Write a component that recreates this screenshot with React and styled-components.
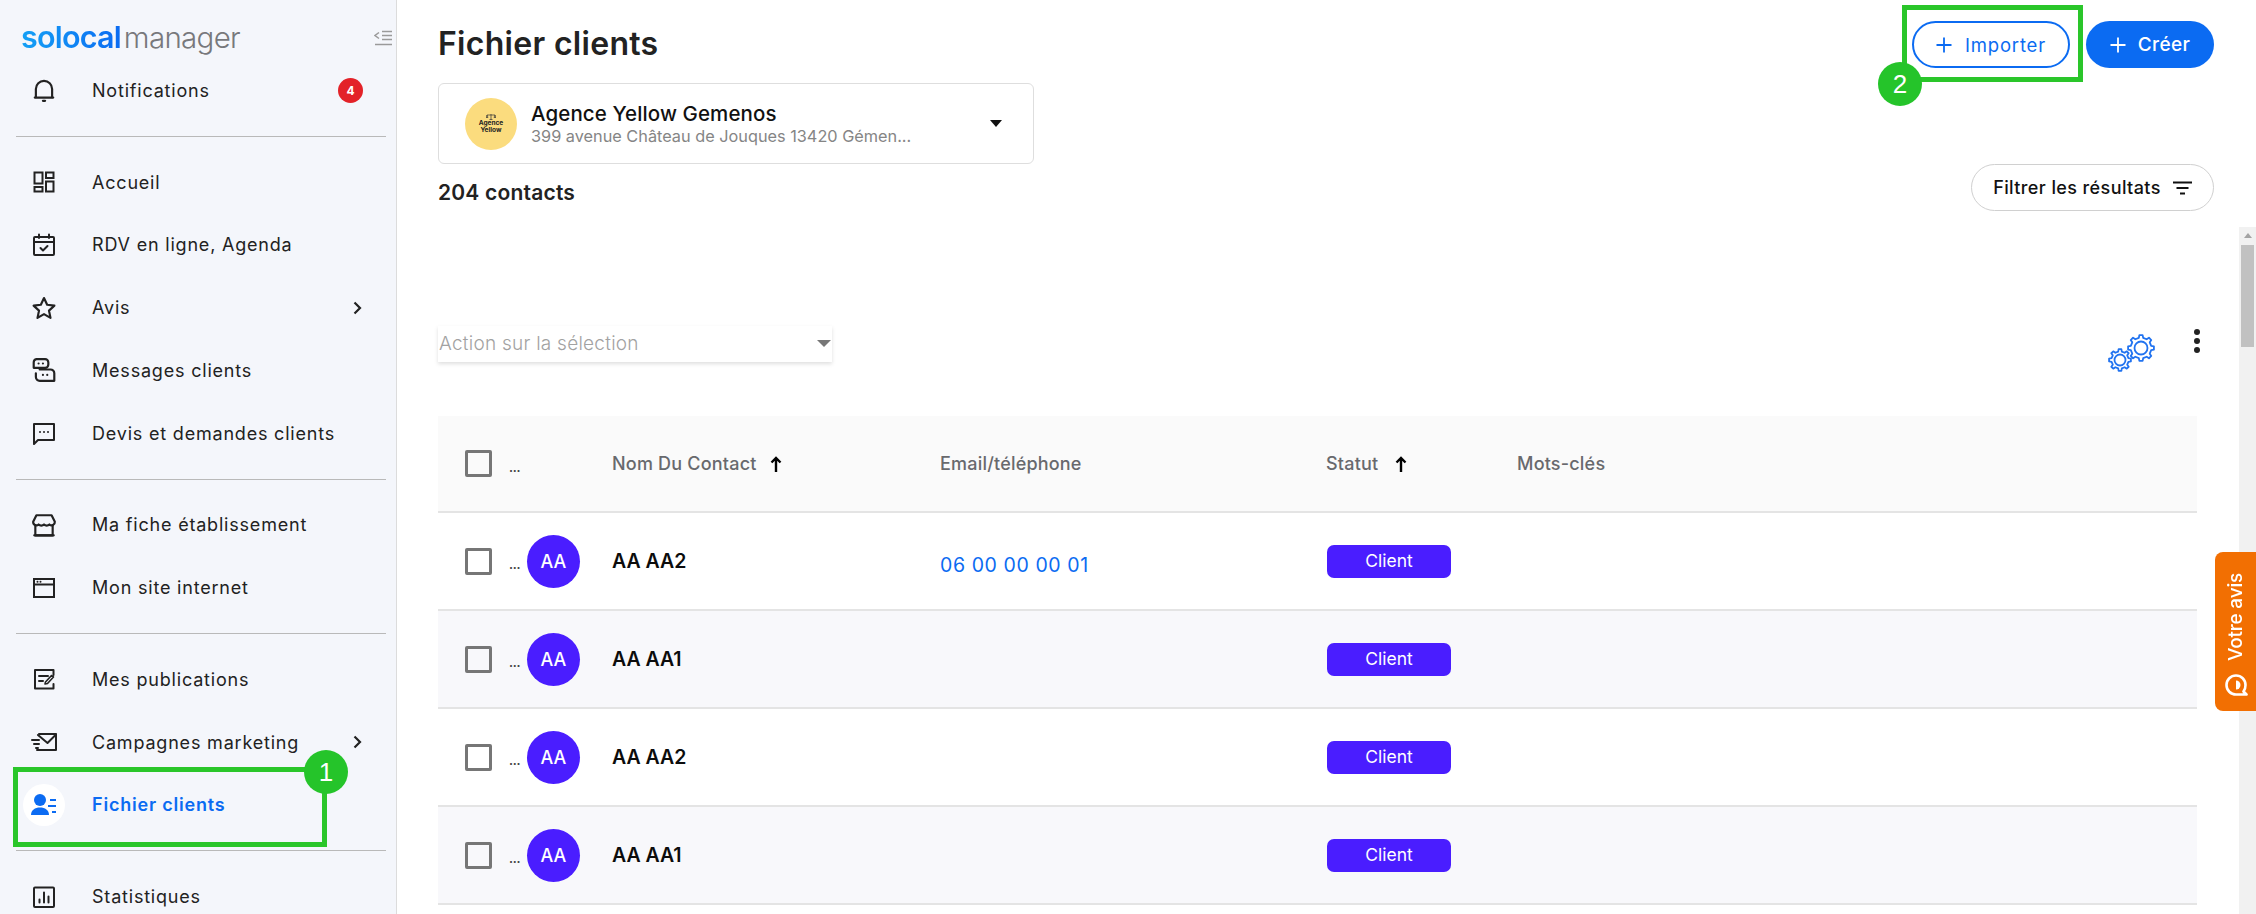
import React from "react";
import styled, { createGlobalStyle } from "styled-components";

const Global = createGlobalStyle`
  html, body { margin: 0; padding: 0; background: #fff; }
  * { box-sizing: border-box; }
  body { font-family: Inter, "Liberation Sans", sans-serif; color: #222; }
`;

const Page = styled.div`
  position: relative;
  display: flex;
  width: 2256px;
  height: 914px;
  overflow: hidden;
  background: #fff;
`;

const Sidebar = styled.aside`
  flex: 0 0 397px;
  height: 914px;
  background: #f4f6fb;
  border-right: 1px solid #dcdcdc;
  overflow: hidden;
`;

const LogoBar = styled.div`
  display: flex;
  align-items: center;
  height: 59px;
  padding: 0 4px 0 21px;
`;

const Logo = styled.div`
  display: flex;
  align-items: baseline;
  font-family: Inter, sans-serif;
  line-height: 44px;
  margin-top: 14px;
`;

const LogoBlue = styled.span`
  font-size: 30.5px;
  letter-spacing: -0.8px;
  font-weight: 600;
  background: linear-gradient(90deg, #14a0f5, #0b6bf2);
  -webkit-background-clip: text;
  background-clip: text;
  color: transparent;
`;

const LogoGrey = styled.span`
  font-size: 29.5px;
  letter-spacing: -0.7px;
  font-weight: 300;
  color: #77787c;
  margin-left: 3px;
`;

const Collapse = styled.div`
  margin-left: auto;
  margin-top: 16px;
  display: flex;
`;

const Divider = styled.hr`
  margin: 14px 10px 14px 16px;
  border: 0;
  height: 1px;
  background: #b9b9b9;
`;

const NavItem = styled.div`
  display: flex;
  align-items: center;
  height: 62.75px;
  padding: 0 33px 0 23px;
  font-size: 18px;
  letter-spacing: 0.8px;
  font-weight: ${(p) => (p.$active ? 600 : 400)};
  color: ${(p) => (p.$active ? "#0b6bf2" : "#222")};
`;

const NavIcon = styled.span`
  flex: 0 0 42px;
  width: 42px;
  height: 42px;
  margin-right: 27px;
  display: flex;
  align-items: center;
  justify-content: center;
  border-radius: 50%;
  background: ${(p) => (p.$active ? "#fff" : "transparent")};
`;

const Badge = styled.span`
  margin-left: auto;
  width: 25px;
  height: 25px;
  border-radius: 50%;
  background: #e32228;
  color: #fff;
  font-size: 12px;
  font-weight: 700;
  letter-spacing: 0;
  display: flex;
  align-items: center;
  justify-content: center;
`;

const Chevron = styled.svg`
  margin-left: auto;
  margin-right: 1px;
`;

const Main = styled.main`
  flex: 1;
  min-width: 0;
  display: flex;
  flex-direction: column;
  height: 914px;
`;

const Header = styled.header`
  flex: 0 0 227px;
  display: flex;
  justify-content: space-between;
  padding: 0 42px 0 41px;
`;

const HeaderLeft = styled.div`
  display: flex;
  flex-direction: column;
`;

const Title = styled.h1`
  margin: 25px 0 0;
  font-size: 32px;
  line-height: 38px;
  font-weight: 600;
  color: #222;
  letter-spacing: 0.3px;
`;

const PlaceCard = styled.div`
  margin-top: 20px;
  width: 596px;
  height: 81px;
  border: 1.5px solid #dedede;
  border-radius: 6px;
  display: flex;
  align-items: center;
  padding: 0 31px 0 26px;
`;

const PlaceAvatar = styled.div`
  flex: 0 0 52px;
  height: 52px;
  border-radius: 50%;
  background: #fbdc7e;
  display: flex;
  flex-direction: column;
  align-items: center;
  justify-content: center;
  font-size: 6.5px;
  line-height: 7px;
  font-weight: 700;
  color: #222;
  text-align: center;
`;

const PlaceText = styled.div`
  margin: -2px 0 0 14px;
`;

const PlaceName = styled.div`
  font-size: 20.5px;
  line-height: 26px;
  font-weight: 500;
  color: #111;
  letter-spacing: 0.1px;
`;

const PlaceAddress = styled.div`
  font-size: 16.3px;
  line-height: 18px;
  font-weight: 400;
  color: #858585;
`;

const Caret = styled.span`
  margin-left: auto;
  width: 0;
  height: 0;
  border-left: ${(p) => p.$half || 6}px solid transparent;
  border-right: ${(p) => p.$half || 6}px solid transparent;
  border-top: 7px solid ${(p) => p.$color || "#111"};
`;

const Contacts = styled.div`
  margin-top: 16px;
  font-size: 21px;
  line-height: 26px;
  font-weight: 600;
  letter-spacing: 0.2px;
  color: #222;
`;

const HeaderRight = styled.div`
  display: flex;
  flex-direction: column;
  align-items: flex-end;
  padding-top: 21px;
`;

const ButtonRow = styled.div`
  display: flex;
  gap: 16px;
`;

const Pill = styled.button`
  height: 47px;
  border-radius: 24px;
  font-family: inherit;
  font-size: 18px;
  font-weight: 500;
  letter-spacing: 0.4px;
  display: flex;
  align-items: center;
  justify-content: center;
  padding: 0;
`;

const ImportButton = styled(Pill)`
  width: 158px;
  gap: 13px;
  background: #fff;
  color: #0b6bf2;
  font-size: 18.5px;
  letter-spacing: 0.8px;
  font-weight: 400;
  border: 2px solid #0b6bf2;
`;

const CreateButton = styled(Pill)`
  width: 128px;
  gap: 12px;
  background: #0b6bf2;
  color: #fff;
  font-size: 19px;
  border: 0;
`;

const FilterButton = styled(Pill)`
  margin-top: 96px;
  width: 243px;
  gap: 12px;
  background: #fff;
  color: #111;
  border: 1.5px solid #d0d0d0;
`;

const Body = styled.div`
  flex: 1;
  min-height: 0;
  display: flex;
`;

const Content = styled.div`
  flex: 1;
  min-width: 0;
  padding: 0 39px 0 41px;
  overflow: hidden;
`;

const Toolbar = styled.div`
  height: 189px;
  display: flex;
  justify-content: space-between;
`;

const ActionSelect = styled.div`
  margin-top: 99px;
  width: 394px;
  height: 36px;
  background: #fff;
  box-shadow: 0 2px 4px rgba(0, 0, 0, 0.13);
  display: flex;
  align-items: center;
  justify-content: space-between;
  padding: 0 1px 2px;
  font-size: 19px;
  letter-spacing: 0.25px;
  font-weight: 300;
  color: #a2a2a2;
`;

const ToolIcons = styled.div`
  display: flex;
  align-items: flex-start;
  padding-top: 106px;
`;

const Kebab = styled.div`
  margin-left: 38px;
  margin-top: -4px;
  display: flex;
  flex-direction: column;
  gap: 3px;
`;

const Dot = styled.span`
  width: 6px;
  height: 6px;
  border-radius: 50%;
  background: #222;
`;

const Table = styled.div`
  margin-right: 3px;
`;

const Grid = styled.div`
  display: grid;
  grid-template-columns: 174px 328px 386px 191px 1fr;
  align-items: center;
  border-bottom: 2px solid #e4e4e4;
`;

const HeadRow = styled(Grid)`
  height: 97px;
  background: #fafafa;
  font-size: 18px;
  letter-spacing: 0.2px;
  font-weight: 500;
  color: #68696d;
`;

const Row = styled(Grid)`
  height: 98px;
  background: ${(p) => (p.$alt ? "#f8f8fb" : "#fff")};
`;

const SelectCell = styled.div`
  display: flex;
  align-items: center;
  padding-left: 27px;
`;

const Check = styled.span`
  flex: 0 0 27px;
  height: 27px;
  border: 3px solid #767676;
  border-radius: 2px;
`;

const Ellipsis = styled.span`
  margin-left: 17px;
  margin-top: 8px;
  width: 11px;
  font-size: 12px;
  line-height: 12px;
  font-weight: 700;
  letter-spacing: -0.3px;
  color: #444;
`;

const Avatar = styled.span`
  margin-left: 7px;
  flex: 0 0 53px;
  height: 53px;
  border-radius: 50%;
  background: #4a1dff;
  color: #fff;
  font-size: 18px;
  font-weight: 500;
  display: flex;
  align-items: center;
  justify-content: center;
`;

const SortCell = styled.div`
  display: flex;
  align-items: center;
  gap: ${(p) => p.$gap}px;
`;

const Name = styled.div`
  font-size: 19.5px;
  font-weight: 600;
  color: #0c0c0c;
  margin-top: -1px;
`;

const Phone = styled.div`
  font-size: 19.5px;
  color: #0b6bf2;
  letter-spacing: 0.6px;
  margin-top: 7px;
`;

const Chip = styled.div`
  margin-left: 1px;
  width: 124px;
  height: 33px;
  border-radius: 7px;
  background: #4a1dff;
  color: #fff;
  font-size: 17.5px;
  display: flex;
  align-items: center;
  justify-content: center;
  padding-bottom: 2px;
`;

const ScrollTrack = styled.div`
  flex: 0 0 17px;
  background: #f1f1f1;
  display: flex;
  flex-direction: column;
  align-items: center;
`;

const ScrollUp = styled.span`
  margin-top: 6px;
  width: 0;
  height: 0;
  border-left: 4.5px solid transparent;
  border-right: 4.5px solid transparent;
  border-bottom: 5px solid #a3a3a3;
`;

const ScrollThumb = styled.span`
  margin-top: 7px;
  width: 13px;
  height: 102px;
  background: #c1c1c1;
`;

const FeedbackTab = styled.div`
  position: absolute;
  right: 0;
  top: 552px;
  width: 41px;
  height: 159px;
  background: #f26f02;
  border-radius: 8px 0 0 8px;
  display: flex;
  flex-direction: column;
  align-items: center;
  padding-top: 21px;
  color: #fff;
`;

const FeedbackText = styled.span`
  writing-mode: vertical-rl;
  transform: rotate(180deg);
  font-size: 19px;
  line-height: 20px;
  font-weight: 500;
  letter-spacing: -0.2px;
`;

const FeedbackIcon = styled.svg`
  margin-top: 12px;
`;

const HighlightBox = styled.div`
  position: absolute;
  border: 5px solid #2ac62a;
  pointer-events: none;
`;

const SidebarHighlight = styled(HighlightBox)`
  left: 13px;
  top: 767px;
  width: 314px;
  height: 80px;
`;

const ImportHighlight = styled(HighlightBox)`
  left: 1902px;
  top: 5px;
  width: 181px;
  height: 77px;
`;

const StepBadge = styled.div`
  position: absolute;
  width: 44px;
  height: 44px;
  border-radius: 50%;
  background: #25c42a;
  color: #fff;
  font-family: "Liberation Sans", Arial, sans-serif;
  font-size: 26px;
  display: flex;
  align-items: center;
  justify-content: center;
`;

const StepOne = styled(StepBadge)`
  left: 304px;
  top: 750px;
`;

const StepTwo = styled(StepBadge)`
  left: 1878px;
  top: 62px;
`;

const S = ({ children, w = 24, h = 24, vb = "0 0 24 24" }) => (
  <svg width={w} height={h} viewBox={vb} fill="none" stroke="#222" strokeWidth="2" strokeLinejoin="round" strokeLinecap="round">
    {children}
  </svg>
);

const Bell = () => (
  <S w={26} h={26}>
    <path d="M4.5 18.5V11a7.5 7.5 0 0 1 15 0v7.5" />
    <path d="M3.5 19h17" />
    <path d="M11 22h2" />
  </S>
);
const Dash = () => (
  <S>
    <rect x="2.5" y="2.5" width="8" height="11" strokeLinejoin="miter" />
    <rect x="14" y="2.5" width="7.5" height="5.5" strokeLinejoin="miter" />
    <rect x="2.5" y="17" width="8" height="4.5" strokeLinejoin="miter" />
    <rect x="14" y="11.5" width="7.5" height="10" strokeLinejoin="miter" />
  </S>
);
const Calendar = () => (
  <S>
    <rect x="2" y="4" width="20" height="18" rx="1" />
    <path d="M2 9h20M7 1.5V5M17 1.5V5" />
    <path d="M8.5 15l2.5 2.5 4.500-4.500" />
  </S>
);
const Star = () => (
  <S w={26} h={26}>
    <path d="M12 2.8l2.9 6.2 6.7.8-5 4.6 1.4 6.700-6-3.400-6 3.400 1.400-6.700-5-4.600 6.700-.8z" />
  </S>
);
const Messages = () => (
  <S w={26} h={26}>
    <path d="M5 2h8a3 3 0 0 1 3 3v2a3 3 0 0 1-3 3H2.500V5a3 3 0 0 1 2.500-3z" />
    <path d="M8 11.500h10a3.500 3.500 0 0 1 3.500 3.500v7H8a3.500 3.500 0 0 1-3.500-3.500V15" />
    <path d="M7 6h.01M11 6h.01M11 16.500h.01M15 16.500h.01" />
  </S>
);
const Quote = () => (
  <S>
    <path d="M2 3h20v16H6l-4 4z" />
    <path d="M8 11h.01M12 11h.01M16 11h.01" />
  </S>
);
const Store = () => (
  <S w={26} h={26}>
    <path d="M5 3h14l3 6a3 3 0 0 1-5 2.500 3.500 3.500 0 0 1-5 0 3.500 3.500 0 0 1-5 0A3 3 0 0 1 2 9z" />
    <path d="M4 12v9.500h16V12" />
    <path d="M3 21.500h18" />
  </S>
);
const Browser = () => (
  <S>
    <rect x="2" y="3" width="20" height="18" strokeLinejoin="miter" />
    <path d="M2 8.500h20M5.500 5.800h.01M8.500 5.800h.01" />
  </S>
);
const Publish = () => (
  <S>
    <path d="M21.500 8V3H3v18.500h18.500V17" />
    <path d="M7 9h9M7 14h4" />
    <path d="M13 17l2.500-.5 6-6.500-2-1.500-6 6.500z" strokeWidth="1.600" />
  </S>
);
const Mail = () => (
  <S w={26} h={24} vb="0 0 26 24">
    <path d="M8 4h17v16H6" />
    <path d="M7 5l9.500 8L25 4.500" />
    <path d="M1 10h7M3 14h5M5 18h2" />
  </S>
);
const ClientsIcon = () => (
  <svg width="26" height="24" viewBox="0 0 26 24" fill="#0b6bf2">
    <circle cx="9" cy="7" r="6" />
    <path d="M0 22c0-5 4-7.500 9-7.500s9 2.500 9 7.500z" />
    <path d="M19 6h6v2h-6zM17 12h8v2h-8zM21 18h4v2h-4z" />
  </svg>
);
const Stats = () => (
  <S>
    <rect x="2" y="2.500" width="20" height="19.500" rx="1" />
    <path d="M7.500 17.500v-3M12 17.500V7.500M16.500 17.500v-6" />
  </S>
);

const Arrow = () => (
  <svg width="12" height="16" viewBox="0 0 12 16" fill="none" stroke="#000" strokeWidth="2.400">
    <path d="M6 16V2M1.500 6.500L6 2l4.500 4.500" />
  </svg>
);

const Plus = ({ color }) => (
  <svg width="16" height="16" viewBox="0 0 16 16" stroke={color} strokeWidth="1.800">
    <path d="M8 0.500v15M0.500 8h15" />
  </svg>
);

const gearPath = (cx, cy, rOuter, rInner, teeth) => {
  const step = (Math.PI * 2) / teeth;
  const pts = [];
  for (let i = 0; i < teeth; i++) {
    const a = i * step - Math.PI / 2;
    const d = step * 0.2;
    const pt = (r, t) => `${(cx + r * Math.cos(t)).toFixed(2)} ${(cy + r * Math.sin(t)).toFixed(2)}`;
    pts.push(pt(rInner, a - d * 1.35), pt(rOuter, a - d * 0.8), pt(rOuter, a + d * 0.8), pt(rInner, a + d * 1.35));
  }
  return `M${pts.join("L")}Z`;
};

const Gears = () => (
  <svg width="48" height="40" viewBox="0 0 48 40" fill="none" stroke="#2173f0" strokeWidth="1.800" strokeLinejoin="round">
    <path d={gearPath(12, 27, 11, 8.600, 8)} />
    <circle cx="12" cy="27" r="5.500" />
    <path d={gearPath(33, 15, 13, 10.400, 8)} />
    <circle cx="33" cy="15" r="6.500" />
  </svg>
);

const FilterIcon = () => (
  <svg width="19" height="14" viewBox="0 0 19 14" stroke="#111" strokeWidth="2">
    <path d="M0 1.500h19M3.500 7h12M7 12.500h5" />
  </svg>
);

const navGroups = [
  [{ label: "Notifications", Icon: Bell, badge: "4" }],
  [
    { label: "Accueil", Icon: Dash },
    { label: "RDV en ligne, Agenda", Icon: Calendar },
    { label: "Avis", Icon: Star, more: true },
    { label: "Messages clients", Icon: Messages },
    { label: "Devis et demandes clients", Icon: Quote },
  ],
  [
    { label: "Ma fiche établissement", Icon: Store },
    { label: "Mon site internet", Icon: Browser },
  ],
  [
    { label: "Mes publications", Icon: Publish },
    { label: "Campagnes marketing", Icon: Mail, more: true },
    { label: "Fichier clients", Icon: ClientsIcon, active: true },
  ],
  [{ label: "Statistiques", Icon: Stats }],
];

const rows = [
  { name: "AA AA2", phone: "06 00 00 00 01" },
  { name: "AA AA1" },
  { name: "AA AA2" },
  { name: "AA AA1" },
];

export default function App() {
  return (
    <Page>
      <Global />
      <Sidebar>
        <LogoBar>
          <Logo>
            <LogoBlue>solocal</LogoBlue>
            <LogoGrey>manager</LogoGrey>
          </Logo>
          <Collapse>
            <svg width="18" height="16" viewBox="0 0 18 16" fill="none" stroke="#9a9a9a" strokeWidth="1.500">
              <path d="M5 2.500L1 5.500l4 3M8 1.500h10M8 5.500h10M8 9.500h10M1 14.500h17" />
            </svg>
          </Collapse>
        </LogoBar>
        {navGroups.map((group, gi) => (
          <React.Fragment key={gi}>
            {gi > 0 && <Divider />}
            {group.map(({ label, Icon, badge, more, active }) => (
              <NavItem key={label} $active={active}>
                <NavIcon $active={active}>
                  <Icon />
                </NavIcon>
                {label}
                {badge && <Badge>{badge}</Badge>}
                {more && (
                  <Chevron width="9" height="14" viewBox="0 0 9 14" fill="none" stroke="#222" strokeWidth="2.200">
                    <path d="M1.500 1.500L7 7l-5.500 5.500" />
                  </Chevron>
                )}
              </NavItem>
            ))}
          </React.Fragment>
        ))}
      </Sidebar>

      <Main>
        <Header>
          <HeaderLeft>
            <Title>Fichier clients</Title>
            <PlaceCard>
              <PlaceAvatar>
                <svg width="10" height="6" viewBox="0 0 10 6" fill="none" stroke="#333" strokeWidth="0.700">
                  <path d="M5 0v5.500M1 1h8M3.500 5.500h3M1 1L0 3.500h2zM9 1L8 3.500h2z" />
                </svg>
                <span>Agence</span>
                <span>Yellow</span>
              </PlaceAvatar>
              <PlaceText>
                <PlaceName>Agence Yellow Gemenos</PlaceName>
                <PlaceAddress>399 avenue Château de Jouques 13420 Gémen...</PlaceAddress>
              </PlaceText>
              <Caret />
            </PlaceCard>
            <Contacts>204 contacts</Contacts>
          </HeaderLeft>
          <HeaderRight>
            <ButtonRow>
              <ImportButton>
                <Plus color="#0b6bf2" />
                Importer
              </ImportButton>
              <CreateButton>
                <Plus color="#fff" />
                Créer
              </CreateButton>
            </ButtonRow>
            <FilterButton>
              Filtrer les résultats
              <FilterIcon />
            </FilterButton>
          </HeaderRight>
        </Header>

        <Body>
          <Content>
            <Toolbar>
              <ActionSelect>
                Action sur la sélection
                <Caret $color="#777" $half={7} />
              </ActionSelect>
              <ToolIcons>
                <Gears />
                <Kebab>
                  <Dot />
                  <Dot />
                  <Dot />
                </Kebab>
              </ToolIcons>
            </Toolbar>
            <Table>
              <HeadRow>
                <SelectCell>
                  <Check />
                  <Ellipsis>...</Ellipsis>
                </SelectCell>
                <SortCell $gap={13}>
                  Nom Du Contact
                  <Arrow />
                </SortCell>
                <div>Email/téléphone</div>
                <SortCell $gap={17}>
                  Statut
                  <Arrow />
                </SortCell>
                <div>Mots-clés</div>
              </HeadRow>
              {rows.map((r, i) => (
                <Row key={i} $alt={i % 2 === 1}>
                  <SelectCell>
                    <Check />
                    <Ellipsis>...</Ellipsis>
                    <Avatar>AA</Avatar>
                  </SelectCell>
                  <Name>{r.name}</Name>
                  <Phone>{r.phone}</Phone>
                  <Chip>Client</Chip>
                  <div />
                </Row>
              ))}
            </Table>
          </Content>
          <ScrollTrack>
            <ScrollUp />
            <ScrollThumb />
          </ScrollTrack>
        </Body>
      </Main>

      <FeedbackTab>
        <FeedbackText>Votre avis</FeedbackText>
        <FeedbackIcon width="24" height="24" viewBox="0 0 24 24" fill="none" stroke="#fff" strokeWidth="2.600">
          <path d="M22.500 21.500H12A9.500 9.500 0 1 1 21.500 12c0 3-.6 5-2 6.500z" strokeLinejoin="round" />
          <path d="M12 7.500a4.500 4.500 0 0 1 0 9z" fill="#fff" stroke="none" />
        </FeedbackIcon>
      </FeedbackTab>

      <SidebarHighlight />
      <ImportHighlight />
      <StepOne>1</StepOne>
      <StepTwo>2</StepTwo>
    </Page>
  );
}
